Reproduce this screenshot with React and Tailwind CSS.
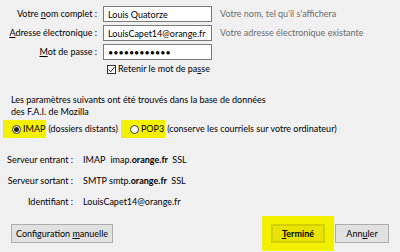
import React, { useState } from 'react';

const font = { fontFamily: 'Lato, "Noto Sans", sans-serif' };

const Field = ({ label, value, type = 'text', hint }) => (
  <div className="flex items-center h-4 mb-[3px]">
    <label className="w-[98px] text-right pr-[1px] whitespace-nowrap">{label}</label>
    <input
      type={type}
      defaultValue={value}
      className="ml-[5px] w-[109px] h-4 border border-[#7a7a7a] bg-white px-[4px] text-[9px] text-black outline-none"
      style={font}
    />
    {hint && <span className="ml-2 text-[#6d6d6d] whitespace-nowrap">{hint}</span>}
  </div>
);

const Radio = ({ checked, onClick, label, rest }) => (
  <div className="flex items-center cursor-pointer" onClick={onClick}>
    <span className="flex items-center h-[18px] bg-[#f3f000] pl-[9px] pr-[1px]">
      <span className="w-[9px] h-[9px] rounded-full border border-[#333] bg-white flex items-center justify-center mr-[2px]">
        {checked && <span className="w-[5px] h-[5px] rounded-full bg-[#222]" />}
      </span>
      <span>{label}</span>
    </span>
    <span className="ml-[2px] whitespace-nowrap">{rest}</span>
  </div>
);

const ServerRow = ({ label, children }) => (
  <div className="flex items-center h-[21px]">
    <span className="w-[73px] text-right whitespace-nowrap">{label}</span>
    <span className="ml-[10px] whitespace-nowrap">{children}</span>
  </div>
);

export default function App() {
  const [protocol, setProtocol] = useState('imap');
  const [remember, setRemember] = useState(true);

  return (
    <div className="w-[400px] h-[252px] bg-[#f0f0f0] text-[9px] leading-[12px] text-black overflow-hidden relative" style={font}>
      <div className="pt-[6px]">
        <Field label={<>Votre <u>n</u>om complet :</>} value="Louis Quatorze" hint="Votre nom, tel qu'il s'affichera" />
        <Field label={<><u>A</u>dresse électronique :</>} value="LouisCapet14@orange.fr" hint="Votre adresse électronique existante" />
        <Field label={<><u>M</u>ot de passe :</>} value="••••••••••••" />
        <label className="flex items-center ml-[107px] mt-[3px] h-3 cursor-pointer">
          <span
            className="w-[9px] h-[9px] border border-[#333] bg-white flex items-center justify-center"
            onClick={() => setRemember(!remember)}
          >
            {remember && (
              <svg width="7" height="7" viewBox="0 0 7 7">
                <path d="M0.5 3.5 L2.7 5.8 L6.5 1" fill="none" stroke="#222" strokeWidth="1" />
              </svg>
            )}
          </span>
          <span className="ml-[2px]">Retenir le mot de pa<u>s</u>se</span>
        </label>
      </div>

      <p className="px-[11px] mt-[19px]">
        Les paramètres suivants ont été trouvés dans la base de données<br />
        des F.A.I. de Mozilla
      </p>

      <div className="flex items-center mt-[2px] pl-[3px] gap-[3px]">
        <Radio checked={protocol === 'imap'} onClick={() => setProtocol('imap')} label="IMAP" rest="(dossiers distants)" />
        <Radio checked={protocol === 'pop3'} onClick={() => setProtocol('pop3')} label="POP3" rest="(conserve les courriels sur votre ordinateur)" />
      </div>

      <div className="mt-[11px]">
        <ServerRow label="Serveur entrant :">
          IMAP <span className="ml-[3px]">imap.<b>orange.fr</b></span> <span className="ml-[2px]">SSL</span>
        </ServerRow>
        <ServerRow label="Serveur sortant :">
          SMTP <span>smtp.<b>orange.fr</b></span> <span className="ml-[2px]">SSL</span>
        </ServerRow>
        <ServerRow label="Identifiant :">LouisCapet14@orange.fr</ServerRow>
      </div>

      <div className="flex items-center mt-[12px] px-[11px]">
        <button className="h-[19px] w-[102px] border border-[#adadad] bg-[#e1e1e1] text-[9px] whitespace-nowrap" style={font}>
          Configuration <u>m</u>anuelle
        </button>
        <div className="ml-auto flex items-center">
          <div className="bg-[#f3f000] px-[9px] py-[8px] -my-[8px]">
            <button className="h-[19px] w-[54px] border-2 border-[#d4d000] bg-[#e8e400] font-bold text-[9px]" style={font}>
              <u>T</u>erminé
            </button>
          </div>
          <button className="ml-[1px] h-[19px] w-[54px] border border-[#adadad] bg-[#e1e1e1] text-[9px]" style={font}>
            Ann<u>u</u>ler
          </button>
        </div>
      </div>
    </div>
  );
}
